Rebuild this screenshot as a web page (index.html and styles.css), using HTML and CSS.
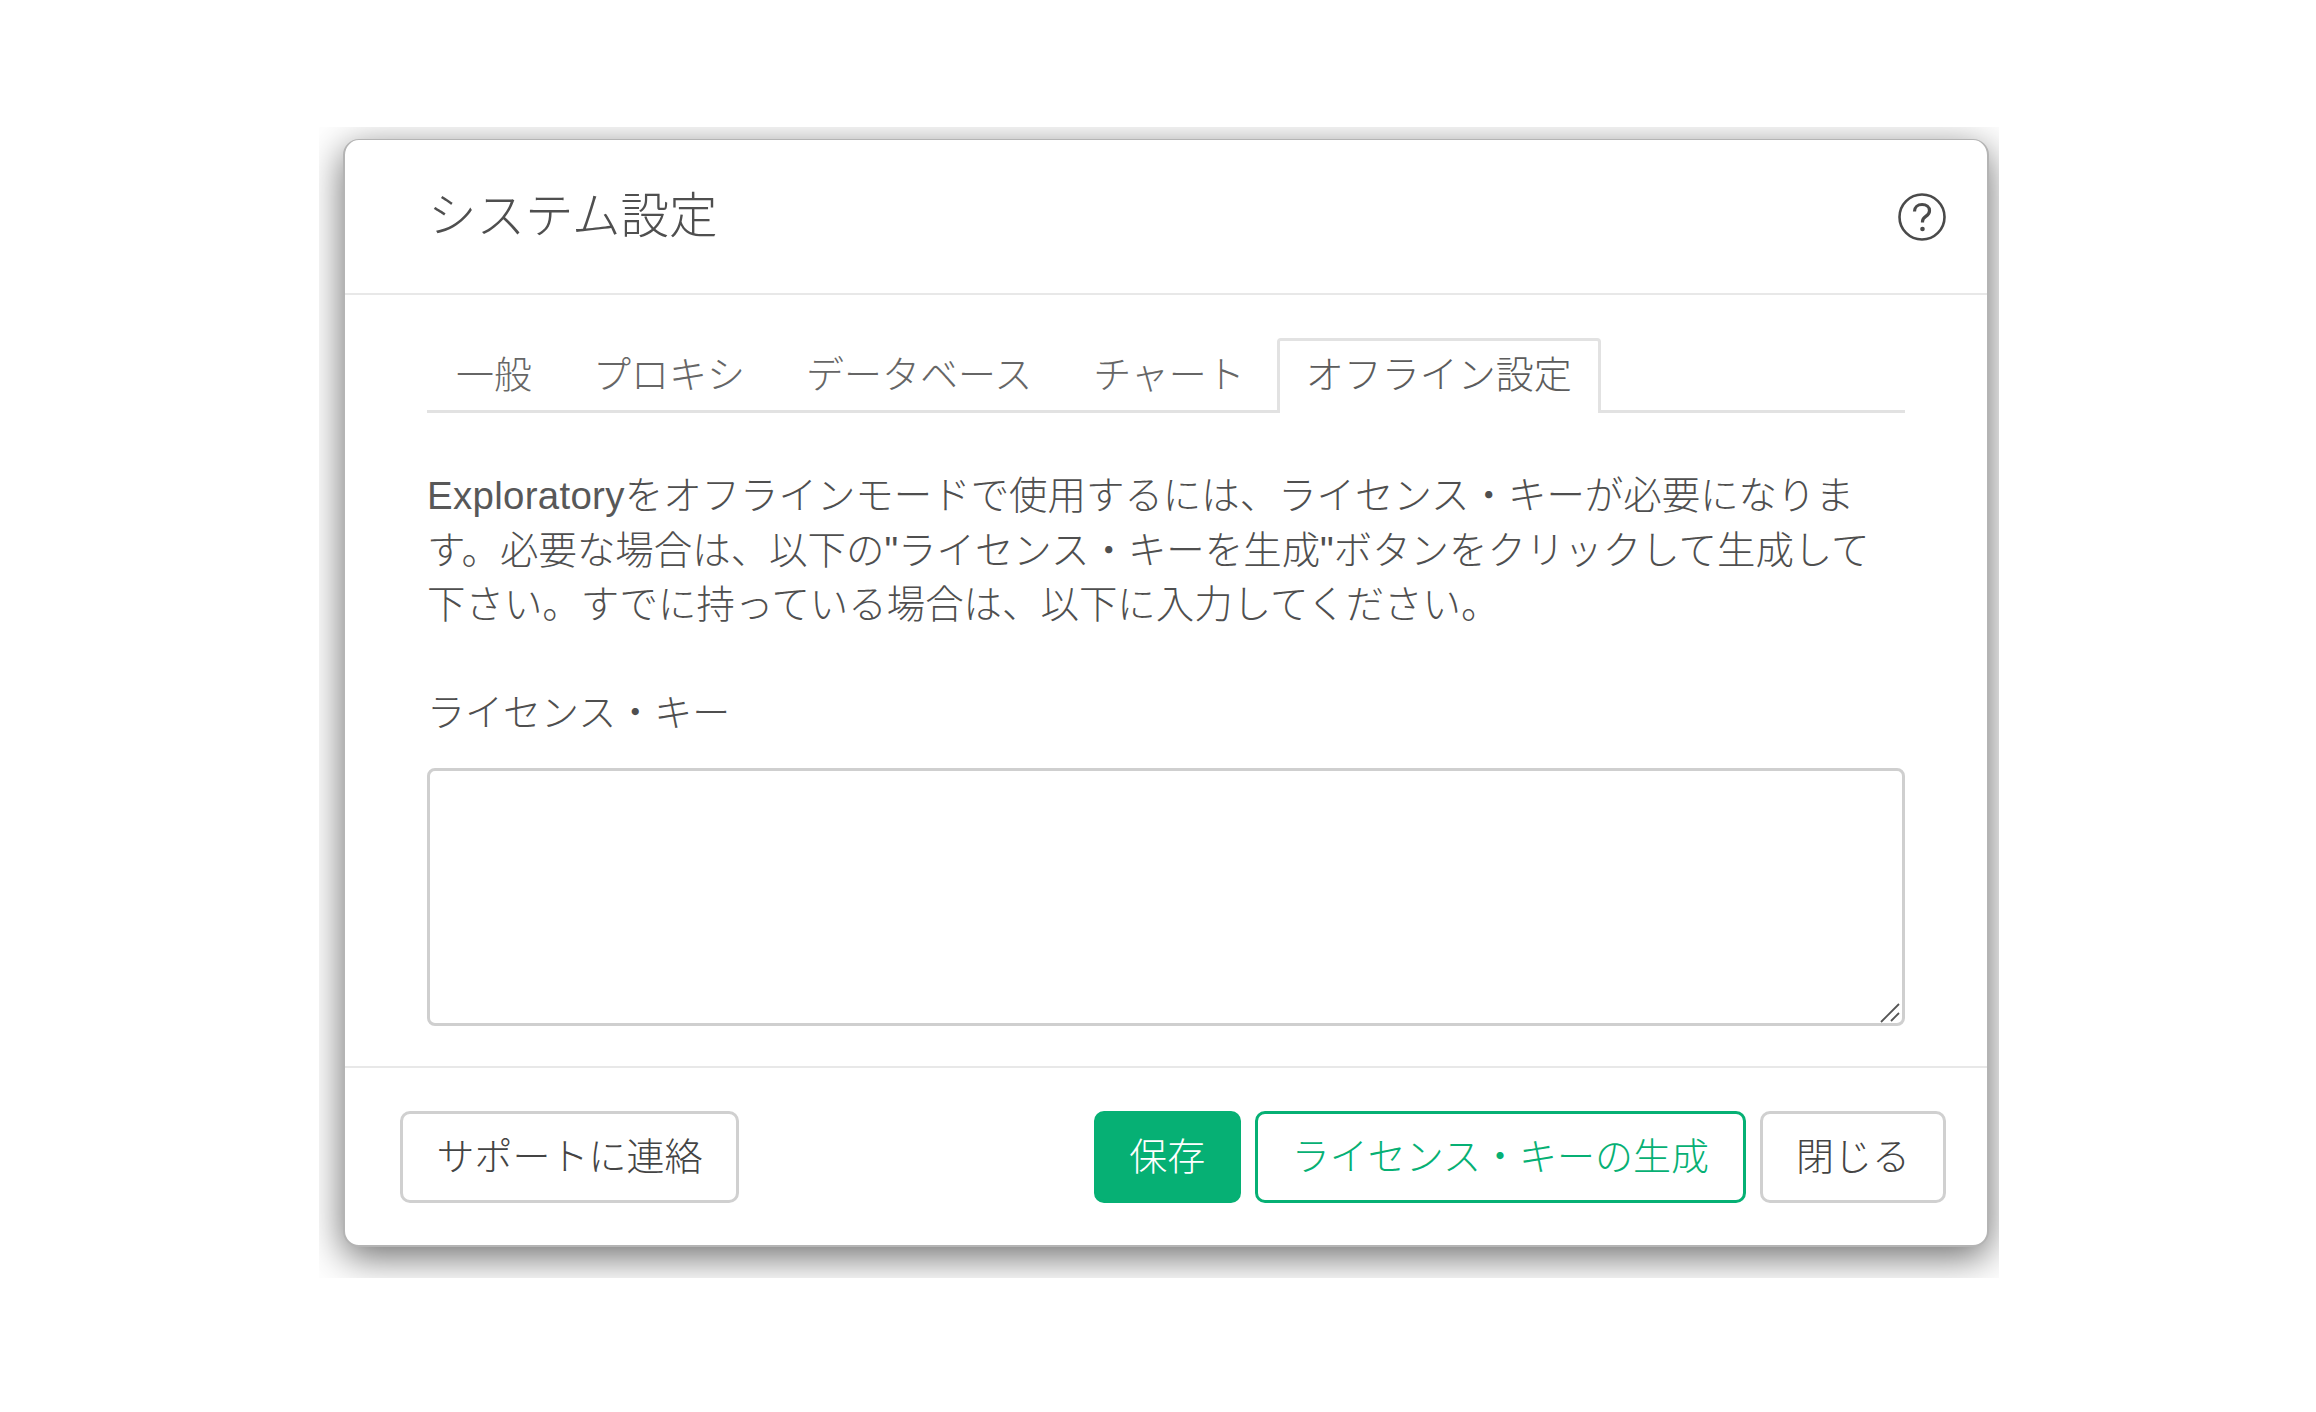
FILE: index.html
```html
<!DOCTYPE html>
<html lang="ja">
<head>
<meta charset="utf-8">
<title>システム設定</title>
<link rel="stylesheet" href="styles.css">
</head>
<body>
<div class="frame">
  <div class="dialog">
    <header class="head">
      <h1 class="title">システム設定</h1>
      <svg class="help" viewBox="0 0 48 48" width="48" height="48" aria-label="ヘルプ">
        <circle cx="24" cy="24" r="22.5" fill="none" stroke="#4a4a4a" stroke-width="2.6"/>
        <path d="M16.500 18.500c0-4.400 3.300-7 7.600-7 4.200 0 7.400 2.500 7.400 6.200 0 2.900-1.700 4.300-3.700 5.700-2 1.400-3.300 2.500-3.300 5.100v1" fill="none" stroke="#4a4a4a" stroke-width="3.200"/>
        <circle cx="24.500" cy="36" r="2.300" fill="#4a4a4a"/>
      </svg>
    </header>
    <div class="content">
      <nav class="tabs">
        <a class="tab">一般</a>
        <a class="tab">プロキシ</a>
        <a class="tab">データベース</a>
        <a class="tab">チャート</a>
        <a class="tab active">オフライン設定</a>
      </nav>
      <p class="desc"><span class="brand">Exploratory</span>をオフラインモードで使用するには、ライセンス・キーが必要になりま<br>す。必要な場合は、以下の"ライセンス・キーを生成"ボタンをクリックして生成して<br>下さい。すでに持っている場合は、以下に入力してください。</p>
      <label class="label" for="key">ライセンス・キー</label>
      <div class="field">
        <textarea class="key" id="key"></textarea>
        <svg class="grip" viewBox="0 0 20 20" width="20" height="20" aria-hidden="true">
          <path d="M1 19 19 1M11 18 19 10" fill="none" stroke="#555" stroke-width="1.800"/>
        </svg>
      </div>
    </div>
    <footer class="foot">
      <button class="btn support">サポートに連絡</button>
      <div class="actions">
        <button class="btn primary">保存</button>
        <button class="btn outline">ライセンス・キーの生成</button>
        <button class="btn close">閉じる</button>
      </div>
    </footer>
  </div>
</div>
</body>
</html>
```
FILE: styles.css
```css
* { box-sizing: border-box; }
html, body { margin: 0; background: #fff; }
body {
  padding: 127px 0 0 319px;
  font-family: "Liberation Sans", "Noto Sans CJK JP", sans-serif;
  font-weight: 300;
  color: #555;
}
.frame {
  width: 1680px;
  height: 1151px;
  padding: 12px 10px 31px 24px;
  overflow: hidden;
}
.dialog {
  width: 1646px;
  height: 1108px;
  background: #fff;
  border: 2px solid #b4b4b4;
  border-width: 1px 2px 2px;
  border-radius: 16px;
  box-shadow: 0 10px 38px rgba(0, 0, 0, 0.58);
  display: flex;
  flex-direction: column;
}
.head {
  height: 155px;
  flex: none;
  border-bottom: 2px solid #e8e8e8;
  padding: 0 41px 0 83px;
  display: flex;
  align-items: center;
  justify-content: space-between;
}
.title {
  margin: 0;
  font-size: 48.500px;
  font-weight: 300;
  color: #4f4f4f;
  line-height: 1;
}
.help { display: block; }
.content {
  height: 773px;
  flex: none;
  padding: 43px 82px 0;
  border-bottom: 2px solid #e8e8e8;
}
.tabs {
  display: flex;
  gap: 3px;
  height: 75px;
  border-bottom: 3px solid #e2e2e2;
}
.tab {
  height: 75px;
  padding: 0 26px;
  font-size: 38px;
  line-height: 69px;
  color: #666;
  border: 3px solid transparent;
  border-bottom: 0;
  border-radius: 4px 4px 0 0;
}
.tab.active {
  background: #fff;
  border-color: #e2e2e2;
  color: #5c5c5c;
}
.desc {
  margin: 56px 0 0;
  font-size: 38.450px;
  line-height: 54.500px;
  white-space: nowrap;
  color: #4f4f4f;
}
.brand {
  letter-spacing: 0.3px;
  color: #585858;
}
.label {
  display: block;
  margin-top: 53px;
  font-size: 38px;
  line-height: 54px;
  color: #4f4f4f;
}
.field {
  position: relative;
  margin-top: 28px;
  height: 258px;
}
.key {
  display: block;
  width: 100%;
  height: 100%;
  border: 3px solid #cfcfcf;
  border-radius: 8px;
  background: #fff;
  outline: none;
  resize: none;
}
.grip {
  position: absolute;
  right: 5px;
  bottom: 3px;
}
.foot {
  flex: 1;
  padding: 43px 41px 0 55px;
  display: flex;
  justify-content: space-between;
  align-items: flex-start;
}
.actions { display: flex; gap: 14px; }
.btn {
  height: 92px;
  padding: 0 34px 1px;
  font: inherit;
  font-size: 38px;
  line-height: 1;
  color: #444;
  background: #fff;
  border: 3px solid #d0d0d0;
  border-radius: 10px;
}
.btn.support { padding-left: 33.500px; padding-right: 33.500px; }
.btn.close { padding-left: 33px; padding-right: 33px; }
.btn.primary {
  background: #06b074;
  border-color: #06b074;
  color: #fff;
  padding-left: 32.500px;
  padding-right: 32.500px;
}
.btn.outline {
  border-color: #06b074;
  color: #06b074;
}
```
